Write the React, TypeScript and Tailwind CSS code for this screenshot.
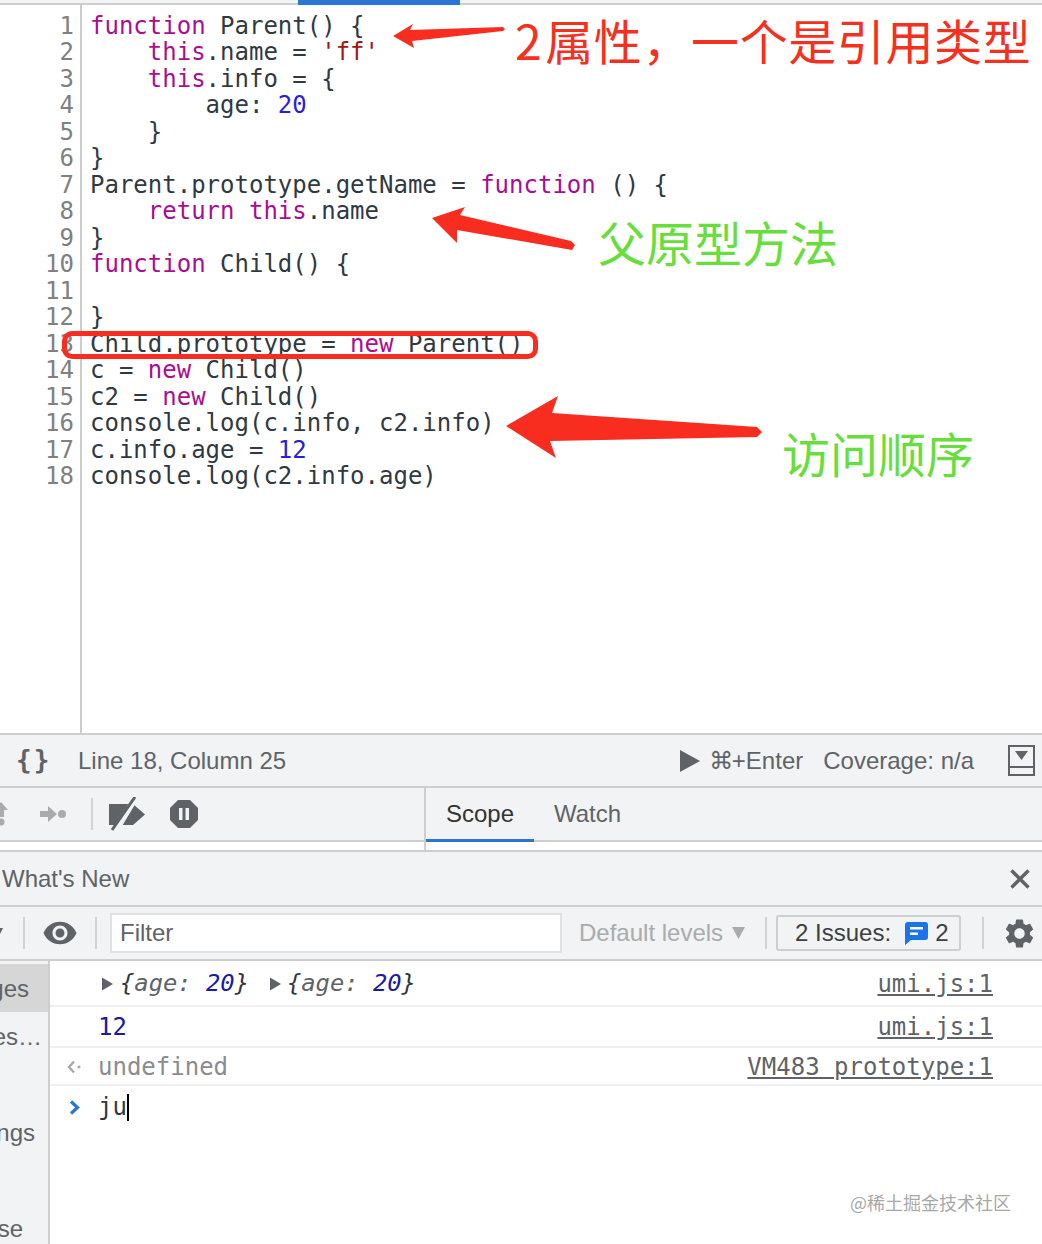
import type { ReactNode } from 'react'
import { MdSettings, MdVisibility } from 'react-icons/md'

const K = ({ children }: { children: ReactNode }) => <span className="text-[#aa0d91]">{children}</span>
const N = ({ children }: { children: ReactNode }) => <span className="text-[#2a1fd6]">{children}</span>
const S = ({ children }: { children: ReactNode }) => <span className="text-[#a31515]">{children}</span>

const codeLines: ReactNode[] = [
  <><K>function</K> Parent() {'{'}</>,
  <>    <K>this</K>.name = <S>'ff'</S></>,
  <>    <K>this</K>.info = {'{'}</>,
  <>        age: <N>20</N></>,
  <>    {'}'}</>,
  <>{'}'}</>,
  <>Parent.prototype.getName = <K>function</K> () {'{'}</>,
  <>    <K>return</K> <K>this</K>.name</>,
  <>{'}'}</>,
  <><K>function</K> Child() {'{'}</>,
  <> </>,
  <>{'}'}</>,
  <>Child.prototype = <K>new</K> Parent()</>,
  <>c = <K>new</K> Child()</>,
  <>c2 = <K>new</K> Child()</>,
  <>console.log(c.info, c2.info)</>,
  <>c.info.age = <N>12</N></>,
  <>console.log(c2.info.age)</>,
]

const sideItems = ['Messages', 'User messages…', '', 'Warnings', '', 'Verbose']
const sidePad = ['pr-[19px]', 'pr-[6px]', '', 'pr-[13px]', '', 'pr-[25px]']

function Sep() {
  return <div className="w-[2px] h-[32px] bg-[#d0d2d4] shrink-0" />
}

function Tri({ className }: { className: string }) {
  return (
    <svg className={className} viewBox="0 0 12 14">
      <polygon points="0,0 12,7 0,14" fill="#5f6368" />
    </svg>
  )
}

export default function App() {
  return (
    <div className="relative w-[1042px] h-[1244px] overflow-hidden bg-white font-['Liberation_Sans',sans-serif] text-[24px] text-[#5f6368]">
      {/* tab strip remnant */}
      <div className="h-[5px] bg-[#f1f3f4] border-b-2 border-[#ccced0] pl-[298px]">
        <div className="w-[162px] h-[5px] bg-[#2a76d2]" />
      </div>

      {/* editor */}
      <div className="flex h-[728px] font-['DejaVu_Sans_Mono',monospace] leading-[26.47px]">
        <div className="w-[82px] shrink-0 border-r-2 border-[#cccccc] pt-[8px] pr-[6px] text-right text-[#808080]">
          {codeLines.map((_, i) => (
            <div key={i}>{i + 1}</div>
          ))}
        </div>
        <div className="pt-[8px] pl-[8px] text-[#303942] whitespace-pre">
          {codeLines.map((line, i) => (
            <div key={i}>{line}</div>
          ))}
        </div>
      </div>

      {/* status bar */}
      <div className="flex items-center h-[55px] bg-[#f1f3f4] border-y-2 border-[#ccced0]">
        <span className="ml-[16px] w-[62px] font-['DejaVu_Sans_Mono',monospace] font-bold text-[#5f6368] text-[26px] tracking-[2px]">{'{}'}</span>
        <span>Line 18, Column 25</span>
        <svg className="ml-auto w-[20px] h-[22px]" viewBox="0 0 20 22">
          <polygon points="0,0 20,11 0,22" fill="#5f6368" />
        </svg>
        <span className="ml-[9px] font-['DejaVu_Sans','Liberation_Sans',sans-serif] text-[24px] tracking-[-1.5px]">⌘<span className="font-['Liberation_Sans',sans-serif] tracking-normal">+Enter</span></span>
        <span className="ml-[20px]">Coverage: n/a</span>
        <svg className="ml-[34px] mr-[7px] w-[27px] h-[31px]" viewBox="0 0 27 31">
          <rect x="1" y="1" width="25" height="29" fill="none" stroke="#5f6368" strokeWidth="2" />
          <line x1="1" y1="22" x2="26" y2="22" stroke="#5f6368" strokeWidth="2" />
          <polygon points="7,6 20,6 13.5,15" fill="#5f6368" />
        </svg>
      </div>

      {/* debugger toolbar + sidebar tabs */}
      <div className="flex h-[54px] bg-[#f1f3f4]">
        <div className="flex items-center w-[424px] shrink-0 border-b-2 border-[#ccced0]">
          <svg className="w-[8px] h-[24px]" viewBox="0 0 8 24">
            <polygon points="-6,8 1,0 8,8 4,8 4,15 -2,15 -2,8" fill="#a9abad" />
            <circle cx="1" cy="20" r="3.5" fill="#a9abad" />
          </svg>
          <svg className="ml-[32px] w-[26px] h-[16px]" viewBox="0 0 26 16">
            <polygon points="0,5 8,5 8,0 17,8 8,16 8,11 0,11" fill="#a9abad" />
            <circle cx="22" cy="8" r="4" fill="#a9abad" />
          </svg>
          <div className="ml-[25px]"><Sep /></div>
          <svg className="ml-[16px] w-[37px] h-[34px]" viewBox="0 0 37 34">
            <polygon points="0,7 24,7 36,17.5 24,28 0,28" fill="#5f6368" />
            <line x1="6" y1="35" x2="27" y2="0" stroke="#f1f3f4" strokeWidth="6" />
            <line x1="3" y1="33" x2="26" y2="0" stroke="#5f6368" strokeWidth="3" />
          </svg>
          <svg className="ml-[24px] w-[28px] h-[28px]" viewBox="0 0 28 28">
            <polygon points="8,0 20,0 28,8 28,20 20,28 8,28 0,20 0,8" fill="#5f6368" />
            <rect x="9" y="8" width="3.5" height="12" fill="#f1f3f4" />
            <rect x="15.5" y="8" width="3.5" height="12" fill="#f1f3f4" />
          </svg>
        </div>
        <div className="flex flex-1 border-l-2 border-b-2 border-[#ccced0]">
          <div className="w-[108px] flex items-center justify-center text-[#333333] border-b-[3px] border-[#2a76d2] -mb-[2px]">Scope</div>
          <div className="ml-[20px] flex items-center">Watch</div>
        </div>
      </div>

      {/* gap under tabs */}
      <div className="flex h-[10px] bg-white border-b-2 border-[#ccced0]">
        <div className="w-[424px] shrink-0" />
        <div className="w-[2px] bg-[#ccced0]" />
      </div>

      {/* drawer header */}
      <div className="flex items-center h-[55px] bg-[#f1f3f4] border-b-2 border-[#ccced0] pl-[2px]">
        <span>What's New</span>
        <svg className="ml-auto mr-[12px] w-[20px] h-[20px]" viewBox="0 0 20 20">
          <path d="M1.5 1.5 18.5 18.5M18.5 1.5 1.5 18.5" stroke="#5f6368" strokeWidth="3.4" />
        </svg>
      </div>

      {/* console toolbar */}
      <div className="flex items-center h-[54px] bg-[#f1f3f4] border-b-2 border-[#ccced0]">
        <svg className="w-[3px] h-[10px]" viewBox="0 0 3 10">
          <polygon points="-6,0 3,0 -2,10" fill="#5f6368" />
        </svg>
        <div className="ml-[20px]"><Sep /></div>
        <MdVisibility className="ml-[17px] text-[#5f6368]" size={36} />
        <div className="ml-[17px]"><Sep /></div>
        <div className="ml-[13px] w-[452px] h-[40px] flex items-center bg-white border-2 border-[#dfe1e3] pl-[8px]">Filter</div>
        <span className="ml-[17px] text-[#a9abad]">Default levels</span>
        <svg className="ml-[9px] w-[13px] h-[12px]" viewBox="0 0 13 12">
          <polygon points="0,0 13,0 6.5,12" fill="#a9abad" />
        </svg>
        <div className="ml-[20px]"><Sep /></div>
        <div className="ml-[9px] w-[185px] h-[36px] flex items-center rounded-[3px] border-2 border-[#ccced0] pl-[17px] text-[#3c4043]">
          <span>2 Issues:</span>
          <svg className="ml-[14px] w-[23px] h-[23px]" viewBox="0 0 23 23">
            <path d="M3 0H20a3 3 0 0 1 3 3V15a3 3 0 0 1-3 3H6L0 23V3a3 3 0 0 1 3-3Z" fill="#1a73e8" />
            <rect x="5" y="5" width="13" height="2.5" fill="#fff" />
            <rect x="5" y="10.5" width="8" height="2.5" fill="#fff" />
          </svg>
          <span className="ml-[7px]">2</span>
        </div>
        <div className="ml-[21px]"><Sep /></div>
        <MdSettings className="ml-[18px] text-[#5f6368]" size={35} />
      </div>

      {/* console */}
      <div className="flex h-[283px]">
        <div className="w-[50px] shrink-0 bg-[#f1f3f4] border-r-2 border-[#ccced0] pt-[3px] overflow-hidden">
          {sideItems.map((item, i) => (
            <div key={i} className={`h-[48px] pt-[2px] flex items-center justify-end whitespace-nowrap ${sidePad[i]} ${i === 0 ? 'bg-[#d6d6d6]' : ''}`}>
              {item}
            </div>
          ))}
        </div>
        <div className="flex-1 font-['DejaVu_Sans_Mono',monospace] text-[#303942]">
          <div className="flex items-center h-[46px] pt-[2px] border-b-2 border-[#f0f0f0] pr-[49px]">
            <Tri className="ml-[52px] w-[11px] h-[14px]" />
            <span className="ml-[7px] italic text-[23.8px]">{'{'}<span className="text-[#5f6368]">age:</span> <span className="text-[#1a1aa6]">20</span>{'}'}</span>
            <Tri className="ml-[21px] w-[11px] h-[14px]" />
            <span className="ml-[6px] italic text-[23.8px]">{'{'}<span className="text-[#5f6368]">age:</span> <span className="text-[#1a1aa6]">20</span>{'}'}</span>
            <a className="ml-auto underline text-[#5f6368]">umi.js:1</a>
          </div>
          <div className="flex items-center h-[41px] border-b-2 border-[#f0f0f0] pl-[48px] pr-[49px]">
            <span className="text-[#1a1aa6]">12</span>
            <a className="ml-auto underline text-[#5f6368]">umi.js:1</a>
          </div>
          <div className="flex items-center h-[38px] pt-[2px] border-b-2 border-[#f0f0f0] pr-[49px]">
            <svg className="ml-[17px] w-[14px] h-[14px]" viewBox="0 0 14 14">
              <path d="M7 1.5 2 7l5 5.5" fill="none" stroke="#a9abad" strokeWidth="2.4" />
              <circle cx="12" cy="7" r="1.6" fill="#a9abad" />
            </svg>
            <span className="ml-[17px] text-[#8a8c8f]">undefined</span>
            <a className="ml-auto underline text-[#5f6368]">VM483 prototype:1</a>
          </div>
          <div className="flex items-center h-[42px]">
            <svg className="ml-[19px] w-[11px] h-[15px]" viewBox="0 0 11 15">
              <path d="M2 1.5 8.5 7.5 2 13.5" fill="none" stroke="#2a76d2" strokeWidth="3.2" />
            </svg>
            <span className="ml-[18px]">ju</span>
            <div className="w-[2px] h-[27px] bg-black" />
          </div>
        </div>
      </div>

      {/* annotations on top of the screenshot */}
      <svg className="absolute left-0 top-0 w-[1042px] h-[500px] pointer-events-none" viewBox="0 0 1042 500">
        <polygon points="393,36 413,24 410,30 503,27 505,29 503,31 412,41 414,48" fill="#f92c20" />
        <polygon points="432,218 465,207 460,215 571,241 575,245 572,250 457,230 457,243" fill="#f92c20" />
        <polygon points="506,426 558,396 552,413 757,427 762,432 757,437 550,441 556,458" fill="#f92c20" />
      </svg>
      <div className="absolute left-[62px] top-[331px] w-[476px] h-[28px] rounded-[10px] border-[5px] border-[#f92c20]" />
      <div className="absolute left-[515px] top-[7px] text-[48px] leading-[64px] tracking-[0.6px] text-[#f5301f] whitespace-nowrap font-['Noto_Sans_CJK_SC',sans-serif]"><span className="mr-[3px]">2</span>属性，一个是引用类型</div>
      <div className="absolute left-[598px] top-[209px] text-[48px] leading-[64px] text-[#68de3c] whitespace-nowrap font-['Noto_Sans_CJK_SC',sans-serif]">父原型方法</div>
      <div className="absolute left-[782px] top-[420px] text-[48px] leading-[64px] text-[#68de3c] whitespace-nowrap font-['Noto_Sans_CJK_SC',sans-serif]">访问顺序</div>
      <div className="absolute left-[850px] top-[1190px] text-[18px] leading-[24px] text-[#a8a8a8] whitespace-nowrap font-['Noto_Sans_CJK_SC',sans-serif]">@稀土掘金技术社区</div>
    </div>
  )
}
